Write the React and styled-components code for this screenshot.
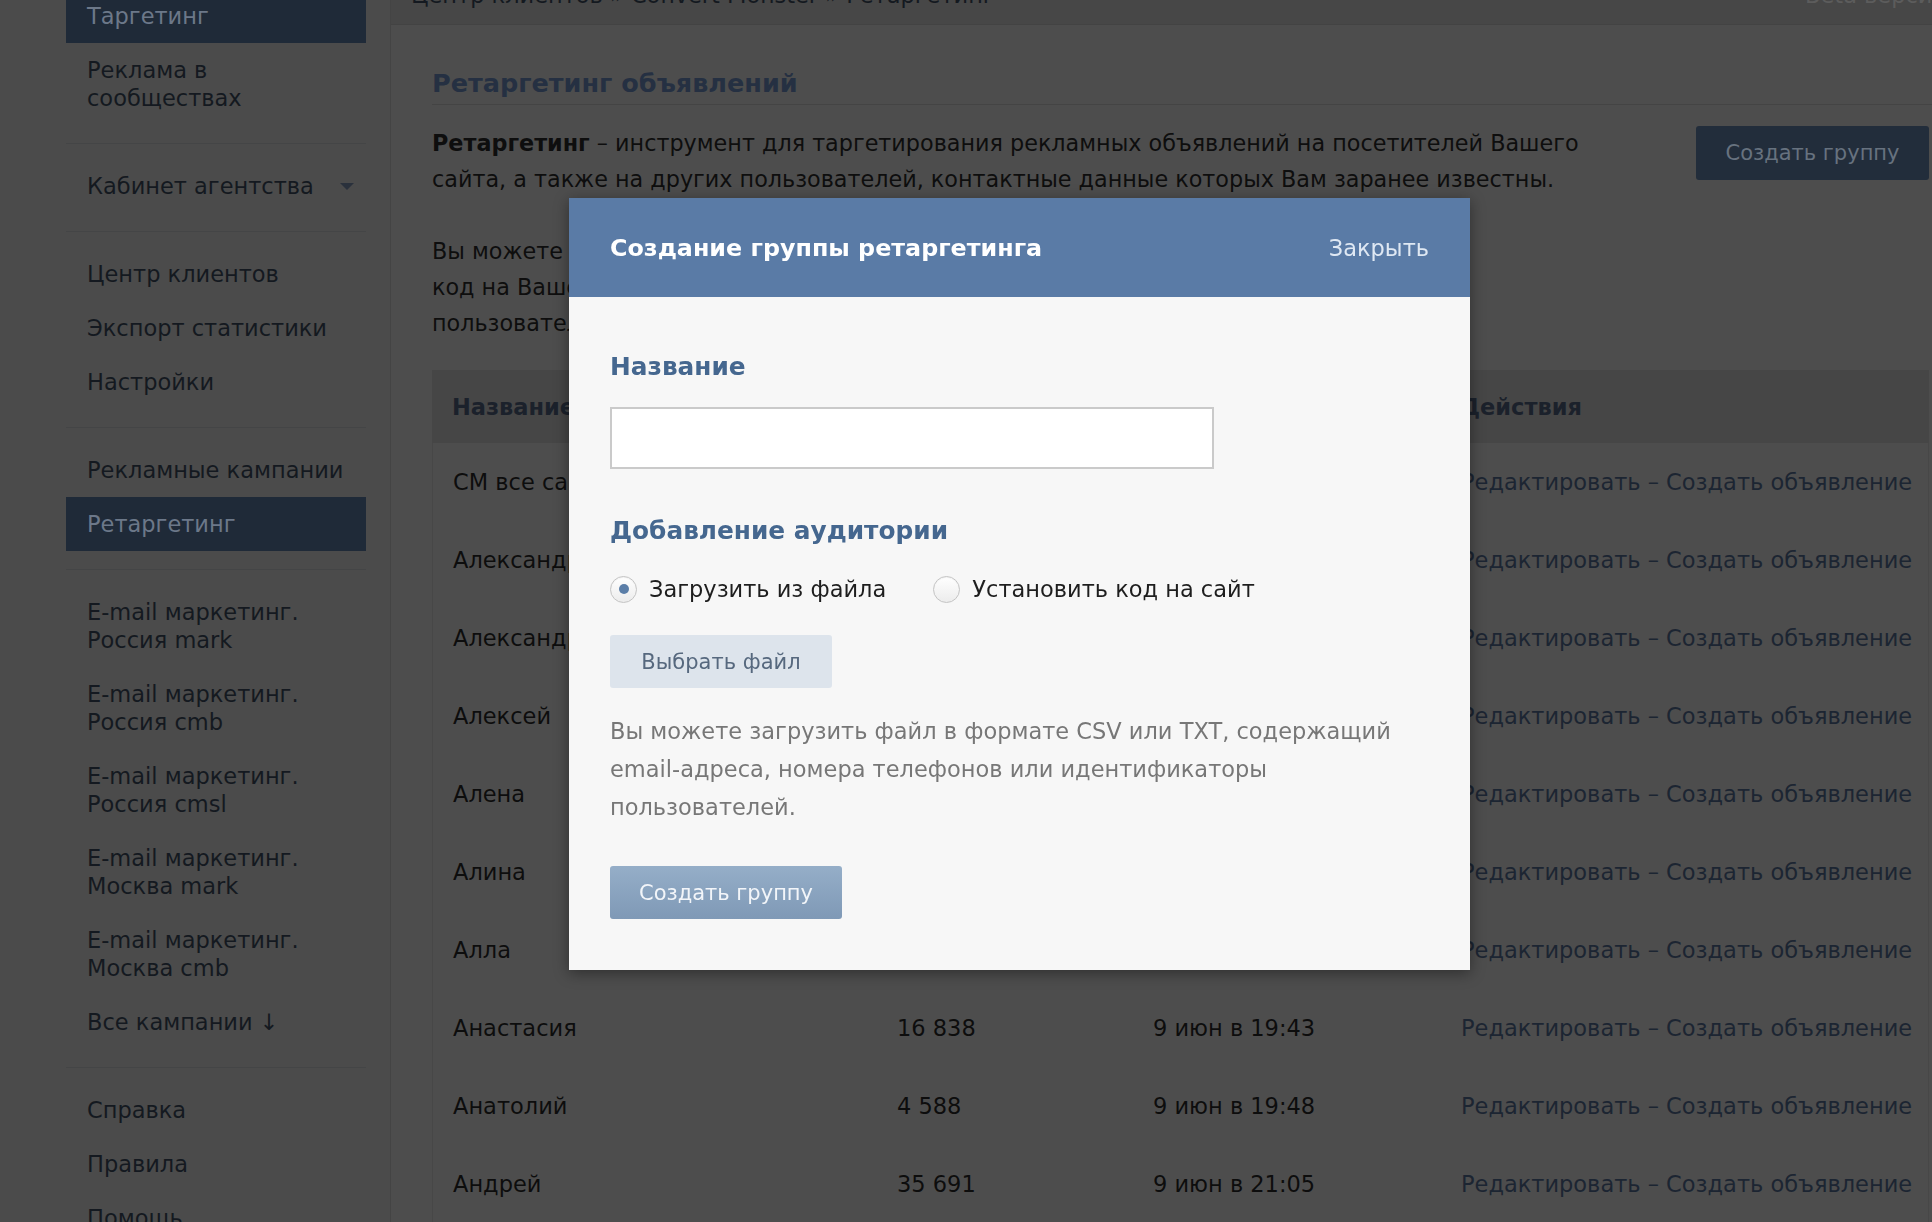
import React from 'react';
import styled, { createGlobalStyle } from 'styled-components';

const GlobalStyle = createGlobalStyle`
  html, body { margin: 0; padding: 0; background: #4d4d4d; overflow: hidden; }
  body { font-family: "DejaVu Sans", Verdana, sans-serif; font-size: 22.5px; color: #111; }
  * { box-sizing: border-box; }
`;

const Page = styled.div`
  display: flex;
  width: 1932px;
  min-height: 1300px;
  margin-top: -35px;
`;

const Sidebar = styled.nav`
  width: 391px;
  flex: none;
  padding: 24px 24px 0 66px;
  background: #4b4b4b;
  border-right: 1px solid #444444;
`;

const MenuSection = styled.div`
  display: flex;
  flex-direction: column;
`;

const MenuItem = styled.div`
  position: relative;
  padding: 13px 21px;
  line-height: 28px;
  white-space: nowrap;
  color: ${p => (p.$active ? '#6c7889' : '#141920')};
  background: ${p => (p.$active ? '#1f2a38' : 'transparent')};
`;

const Caret = styled.span`
  position: absolute;
  right: 12px;
  top: 50%;
  margin-top: -3px;
  width: 0;
  height: 0;
  border-left: 7px solid transparent;
  border-right: 7px solid transparent;
  border-top: 7px solid #2a313c;
`;

const Divider = styled.div`
  height: 1px;
  margin: 18px 0 15px;
  background: #444546;
`;

const Main = styled.main`
  flex: 1;
  display: flex;
  flex-direction: column;
  background: #4d4d4d;
`;

const TopBar = styled.div`
  height: 60px;
  display: flex;
  align-items: center;
  justify-content: space-between;
  padding: 0 0 0 20px;
  background: #474747;
  border-bottom: 1px solid #434343;
  color: #141920;
  white-space: nowrap;
`;

const Beta = styled.span`
  color: #5c5c5c;
  margin-right: -14px;
`;

const Content = styled.div`
  padding: 0 3px 0 41px;
  display: flex;
  flex-direction: column;
`;

const PageTitle = styled.h2`
  margin: 43px -3px 0 0;
  padding-bottom: 6px;
  font-size: 25.5px;
  line-height: 30px;
  font-weight: bold;
  color: #253042;
  border-bottom: 1px solid #444444;
`;

const IntroRow = styled.div`
  display: flex;
  justify-content: space-between;
  align-items: flex-start;
  margin-top: 20px;
`;

const IntroText = styled.div`
  line-height: 36px;
  font-size: 22.3px;
  color: #0e0e0e;
  white-space: nowrap;
`;

const Para = styled.p`
  margin: ${p => (p.$first ? '0' : '36px 0 0')};
  b { font-weight: bold; }
`;

const DarkButton = styled.button`
  flex: none;
  width: 233px;
  height: 54px;
  margin-top: 1px;
  border: none;
  border-radius: 3px;
  background: #222d3b;
  color: #67727f;
  font-family: inherit;
  font-size: 21px;
`;

const Table = styled.div`
  margin-top: 29px;
  display: flex;
  flex-direction: column;
`;

const HeadRow = styled.div`
  display: grid;
  grid-template-columns: 443px 256px 308px 1fr;
  height: 73px;
  align-items: center;
  background: #464646;
  font-weight: bold;
  color: #1b212b;
`;

const Body = styled.div`
  display: flex;
  flex-direction: column;
  border-left: 1px solid #474747;
  border-right: 1px solid #474747;
`;

const Row = styled.div`
  display: grid;
  grid-template-columns: 443px 256px 308px 1fr;
  height: 78px;
  align-items: center;
  color: #0d0d0d;
`;

const Cell = styled.div`
  padding-left: ${p => (p.$first ? '20px' : '21px')};
  white-space: nowrap;
  overflow: hidden;
`;

const Links = styled(Cell)`
  color: #1c2532;
`;

const Modal = styled.div`
  position: fixed;
  left: 569px;
  top: 198px;
  width: 901px;
  background: #f7f7f7;
  box-shadow: 0 3px 14px rgba(0, 0, 0, 0.4);
  display: flex;
  flex-direction: column;
`;

const ModalHead = styled.div`
  height: 99px;
  padding: 0 41px;
  display: flex;
  align-items: center;
  justify-content: space-between;
  background: #5a7ba6;
`;

const ModalTitle = styled.div`
  color: #ffffff;
  font-weight: bold;
  font-size: 23.8px;
`;

const Close = styled.span`
  color: #dfe8f3;
  font-size: 22.5px;
`;

const ModalBody = styled.div`
  padding: 55px 41px 51px;
  display: flex;
  flex-direction: column;
  align-items: flex-start;
`;

const Label = styled.div`
  font-size: 24.8px;
  line-height: 30px;
  font-weight: bold;
  color: #45678f;
  margin-top: ${p => p.$mt || 0}px;
`;

const Input = styled.input`
  margin-top: 25px;
  width: 604px;
  height: 62px;
  border: 2px solid #cacaca;
  background: #fff;
  font-family: inherit;
  font-size: 22.5px;
  outline: none;
`;

const RadioRow = styled.div`
  margin-top: 28px;
  display: flex;
  align-items: center;
  gap: 47px;
  line-height: 30px;
`;

const RadioLabel = styled.label`
  display: flex;
  align-items: center;
  gap: 12px;
  color: #1e1e1e;
`;

const RadioCircle = styled.span`
  position: relative;
  width: 27px;
  height: 27px;
  border-radius: 50%;
  border: 1px solid #c4c4c4;
  background: linear-gradient(#ffffff, #ececec);
  box-shadow: inset 0 1px 1px rgba(0,0,0,0.05);
  &::after {
    content: '';
    display: ${p => (p.$checked ? 'block' : 'none')};
    position: absolute;
    left: 50%;
    top: 50%;
    width: 10px;
    height: 10px;
    margin: -5px 0 0 -5px;
    border-radius: 50%;
    background: #5b7ea8;
  }
`;

const FileButton = styled.button`
  margin-top: 31px;
  width: 222px;
  height: 53px;
  border: none;
  border-radius: 3px;
  background: #dde4ec;
  color: #56687e;
  font-family: inherit;
  font-size: 21px;
`;

const Hint = styled.p`
  margin: 24px 0 0;
  line-height: 38px;
  color: #777777;
  white-space: nowrap;
`;

const SubmitButton = styled.button`
  margin-top: 40px;
  width: 232px;
  height: 53px;
  border: none;
  border-radius: 3px;
  background: linear-gradient(#95aec8, #7f99b6);
  color: #f2f5f9;
  font-family: inherit;
  font-size: 21px;
`;

const menu = [
  [{ lines: ['Таргетинг'], active: true }, { lines: ['Реклама в', 'сообществах'] }],
  [{ lines: ['Кабинет агентства'], caret: true }],
  [{ lines: ['Центр клиентов'] }, { lines: ['Экспорт статистики'] }, { lines: ['Настройки'] }],
  [{ lines: ['Рекламные кампании'] }, { lines: ['Ретаргетинг'], active: true }],
  [
    { lines: ['E-mail маркетинг.', 'Россия mark'] },
    { lines: ['E-mail маркетинг.', 'Россия cmb'] },
    { lines: ['E-mail маркетинг.', 'Россия cmsl'] },
    { lines: ['E-mail маркетинг.', 'Москва mark'] },
    { lines: ['E-mail маркетинг.', 'Москва cmb'] },
    { lines: ['Все кампании ↓'] },
  ],
  [{ lines: ['Справка'] }, { lines: ['Правила'] }, { lines: ['Помощь'] }],
];

const rows = [
  ['СМ все сайты', '128 402', '8 июн в 12:10'],
  ['Александр', '41 227', '9 июн в 19:21'],
  ['Александра', '22 905', '9 июн в 19:24'],
  ['Алексей', '38 140', '9 июн в 19:27'],
  ['Алена', '9 812', '9 июн в 19:31'],
  ['Алина', '11 064', '9 июн в 19:35'],
  ['Алла', '5 273', '9 июн в 19:39'],
  ['Анастасия', '16 838', '9 июн в 19:43'],
  ['Анатолий', '4 588', '9 июн в 19:48'],
  ['Андрей', '35 691', '9 июн в 21:05'],
];

export default function App() {
  return (
    <>
      <GlobalStyle />
      <Page>
        <Sidebar>
          {menu.map((section, si) => (
            <React.Fragment key={si}>
              {si > 0 && <Divider />}
              <MenuSection>
                {section.map((item, ii) => (
                  <MenuItem key={ii} $active={item.active}>
                    {item.lines.map((l, li) => (
                      <React.Fragment key={li}>
                        {li > 0 && <br />}
                        {l}
                      </React.Fragment>
                    ))}
                    {item.caret && <Caret />}
                  </MenuItem>
                ))}
              </MenuSection>
            </React.Fragment>
          ))}
        </Sidebar>
        <Main>
          <TopBar>
            <span>Центр клиентов » Convert Monster » Ретаргетинг</span>
            <Beta>Beta версия</Beta>
          </TopBar>
          <Content>
            <PageTitle>Ретаргетинг объявлений</PageTitle>
            <IntroRow>
              <IntroText>
                <Para $first>
                  <b>Ретаргетинг</b> – инструмент для таргетирования рекламных объявлений на посетителей Вашего
                  <br />
                  сайта, а также на других пользователей, контактные данные которых Вам заранее известны.
                </Para>
                <Para>
                  Вы можете собрать аудиторию посетителей сайта, установив на него специальный
                  <br />
                  код на Вашем сайте, или загрузить список телефонов, email или идентификаторов
                  <br />
                  пользователей ВКонтакте.
                </Para>
              </IntroText>
              <DarkButton>Создать группу</DarkButton>
            </IntroRow>
            <Table>
              <HeadRow>
                <Cell $first>Название</Cell>
                <Cell>Аудитория</Cell>
                <Cell>Обновлена</Cell>
                <Cell>Действия</Cell>
              </HeadRow>
              <Body>
                {rows.map((r, i) => (
                  <Row key={i}>
                    <Cell $first>{r[0]}</Cell>
                    <Cell>{r[1]}</Cell>
                    <Cell>{r[2]}</Cell>
                    <Links>Редактировать – Создать объявление</Links>
                  </Row>
                ))}
              </Body>
            </Table>
          </Content>
        </Main>
      </Page>
      <Modal>
        <ModalHead>
          <ModalTitle>Создание группы ретаргетинга</ModalTitle>
          <Close>Закрыть</Close>
        </ModalHead>
        <ModalBody>
          <Label>Название</Label>
          <Input type="text" />
          <Label $mt={47}>Добавление аудитории</Label>
          <RadioRow>
            <RadioLabel>
              <RadioCircle $checked />
              Загрузить из файла
            </RadioLabel>
            <RadioLabel>
              <RadioCircle />
              Установить код на сайт
            </RadioLabel>
          </RadioRow>
          <FileButton>Выбрать файл</FileButton>
          <Hint>
            Вы можете загрузить файл в формате CSV или TXT, содержащий
            <br />
            email-адреса, номера телефонов или идентификаторы
            <br />
            пользователей.
          </Hint>
          <SubmitButton>Создать группу</SubmitButton>
        </ModalBody>
      </Modal>
    </>
  );
}
